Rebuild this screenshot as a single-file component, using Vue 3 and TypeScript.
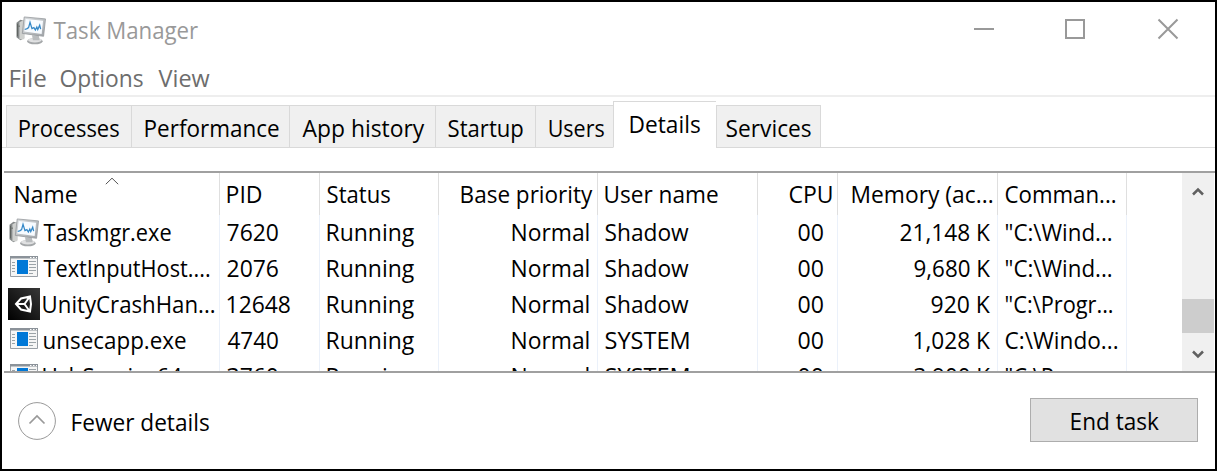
<script setup lang="ts">
import type { Directive } from 'vue'

type Cell = [string, number]
type Row = { icon: 'monitor' | 'program' | 'unity'; cells: Cell[] }

// Condenses a label so that its ink spans the given width, starting at the box's left edge.
const vFit: Directive<HTMLElement, number> = {
  mounted(el, { value }) {
    const ctx = document.createElement('canvas').getContext('2d')
    if (!ctx) return
    const cs = getComputedStyle(el)
    ctx.font = `${cs.fontWeight} ${cs.fontSize} ${cs.fontFamily}`
    const m = ctx.measureText(el.textContent ?? '')
    const scale = value / (m.actualBoundingBoxRight + m.actualBoundingBoxLeft)
    el.style.width = `${value}px`
    el.style.transform = `translateX(${m.actualBoundingBoxLeft * scale + 0.5}px) scaleX(${scale})`
  },
}

const menus: Cell[] = [['File', 35], ['Options', 83], ['View', 51]]
const tabs: { label: string; ink: number; cls: string }[] = [
  { label: 'Processes', ink: 100, cls: 'processes' },
  { label: 'Performance', ink: 133, cls: 'performance' },
  { label: 'App history', ink: 122, cls: 'history' },
  { label: 'Startup', ink: 75, cls: 'startup' },
  { label: 'Users', ink: 55, cls: 'users' },
  { label: 'Details', ink: 70, cls: 'details' },
  { label: 'Services', ink: 85, cls: 'services' },
]
const columns: Cell[] = [
  ['Name', 61], ['PID', 34], ['Status', 63], ['Base priority', 131],
  ['User name', 112], ['CPU', 42], ['Memory (ac...', 140], ['Comman...', 110],
]
const rows: Row[] = [
  { icon: 'monitor', cells: [['Taskmgr.exe', 127], ['7620', 51], ['Running', 87], ['Normal', 76], ['Shadow', 83], ['00', 25], ['21,148 K', 90], ['"C:\\Wind...', 106]] },
  { icon: 'program', cells: [['TextInputHost....', 166], ['2076', 51], ['Running', 87], ['Normal', 76], ['Shadow', 83], ['00', 25], ['9,680 K', 76], ['"C:\\Wind...', 106]] },
  { icon: 'unity', cells: [['UnityCrashHan...', 171], ['12648', 63], ['Running', 87], ['Normal', 76], ['Shadow', 83], ['00', 25], ['920 K', 59], ['"C:\\Progr...', 107]] },
  { icon: 'program', cells: [['unsecapp.exe', 142], ['4740', 51], ['Running', 87], ['Normal', 76], ['SYSTEM', 83], ['00', 25], ['1,028 K', 76], ['C:\\Windo...', 112]] },
  { icon: 'program', cells: [['UsbService64....', 161], ['3760', 51], ['Running', 87], ['Normal', 76], ['SYSTEM', 83], ['00', 25], ['3,900 K', 76], ['"C:\\Progr...', 107]] },
]
</script>

<template>
  <div class="window">
    <svg class="defs" width="0" height="0">
      <defs>
        <linearGradient id="bezel" x1="0" y1="0" x2="1" y2="1">
          <stop offset="0" stop-color="#dcdfe1" /><stop offset="1" stop-color="#a0a4a8" />
        </linearGradient>
        <linearGradient id="dark" x1="0" y1="1" x2="1" y2="0">
          <stop offset="0" stop-color="#000" /><stop offset="1" stop-color="#383838" />
        </linearGradient>
      </defs>
      <symbol id="monitor" viewBox="0 0 32 30">
        <path d="M1 7 5 4 9 5V23L5 25 1 22Z" fill="#85898a" />
        <path d="M4 6.500 9 4V24L4 24Z" fill="#cfd1cf" />
        <path d="M2 8v13M3 10.500h1.500" stroke="#5c615d" />
        <ellipse cx="20" cy="26" rx="8" ry="3.300" fill="#a4a7a9" />
        <ellipse cx="20" cy="25" rx="7" ry="2.300" fill="#e0e1e2" />
        <path d="M17 20h7l1 5h-7z" fill="#b9bcbe" />
        <path d="M9 1 31 3 29 21 7 18Z" fill="url(#bezel)" stroke="#92969a" stroke-width=".8" />
        <path d="M10.500 3 28.500 5 27 18.500 9 16Z" fill="#f7fbff" />
        <path d="M9.500 14 12 13 13.500 12 15 6.500 17 13 19 12 20.500 14.500 22 11.500 23 14 25 9.500 26 13.500" fill="none" stroke="#3488c8" stroke-width="1.300" />
      </symbol>
      <symbol id="program" viewBox="0 0 28 21">
        <path d="M.5.5h27v20H.5z" fill="#f5f5f5" stroke="#999fa6" />
        <path d="M0 0h28v2.500H0z" fill="#8b9299" />
        <path d="M20 1.500h1.500M23 1.500h1.500M26 1.500h1" stroke="#fff" />
        <path d="M7 4h11v14H7z" fill="#0078d7" />
        <path d="M2 6.500h3M2 9.500h3M2 12.500h3M2 15.500h3M19 5.500h7M19 8.500h7M19 11.500h7M19 14.500h7M19 17.500h4" stroke="#9ba3a8" />
      </symbol>
      <symbol id="unity" viewBox="0 0 32 32">
        <path d="M0 0h32v32H0z" fill="url(#dark)" />
        <path d="M8 16 13 10.500 22 8.500 23 16 22 23.500 13 21.500ZM8 16h8.500M16.500 16 21.500 9M16.500 16l5 7" fill="none" stroke="#fff" stroke-width="2" />
      </symbol>
    </svg>

    <header class="titlebar">
      <svg class="app-icon"><use href="#monitor" /></svg>
      <span v-fit="145" class="t title">Task Manager</span>
      <svg class="controls" width="204" height="22" viewBox="0 0 204 22" fill="none" stroke="#999" stroke-width="2">
        <path d="M0 11h20M92 2h18v18H92z" /><path d="m184.500 1.500 19 19m0-19-19 19" />
      </svg>
    </header>

    <nav class="menu">
      <span v-for="[label, ink] in menus" :key="label" v-fit="ink" class="t">{{ label }}</span>
    </nav>

    <div class="tabs">
      <div v-for="tab in tabs" :key="tab.label" class="tab" :class="tab.cls">
        <span v-fit="tab.ink" class="t">{{ tab.label }}</span>
      </div>
    </div>

    <div class="list">
      <div class="table">
        <div class="grid head">
          <div v-for="([label, ink], i) in columns" :key="label" class="cell" :class="'c' + i">
            <span v-fit="ink" class="t">{{ label }}</span>
            <svg v-if="i === 0" class="sort" width="14" height="8" viewBox="0 0 14 8"><path d="m.8 7.200 6.200-6 6.200 6" fill="none" stroke="#555" /></svg>
          </div>
        </div>
        <div v-for="(row, r) in rows" :key="r" class="grid row">
          <div v-for="([text, ink], i) in row.cells" :key="i" class="cell" :class="'c' + i">
            <svg v-if="i === 0" class="icon" :class="row.icon"><use :href="'#' + row.icon" /></svg>
            <span v-fit="ink" class="t">{{ text }}</span>
          </div>
        </div>
      </div>
      <div class="scrollbar">
        <svg width="12" height="9" viewBox="0 0 12 9"><path d="m1 7.500 5-5 5 5" /></svg>
        <div class="thumb"></div>
        <svg width="12" height="9" viewBox="0 0 12 9"><path d="m1 1.500 5 5 5-5" /></svg>
      </div>
    </div>

    <footer class="footer">
      <svg width="38" height="38" viewBox="0 0 38 38" fill="none">
        <circle cx="19" cy="19" r="18.400" stroke="#999" /><path d="m11.500 21.500 7.500-7.500 7.500 7.500" stroke="#999" stroke-width="1.700" />
      </svg>
      <span v-fit="137" class="t fewer">Fewer details</span>
      <button class="end"><span v-fit="88" class="t">End task</span></button>
    </footer>
  </div>
</template>

<style>
body { margin: 0; overflow: hidden; }
</style>

<style scoped>
.window {
  box-sizing: border-box; width: 1217px; height: 471px; border: 2px solid #000; background: #fff;
  display: flex; flex-direction: column; overflow: hidden;
  font: 23.5px/32px "Open Sans", "Noto Sans", sans-serif; color: #000;
}
.defs { position: absolute; }
.t { display: block; white-space: nowrap; transform-origin: 0 50%; flex: none; }
.titlebar { height: 60px; flex: none; display: flex; align-items: flex-start; padding-left: 13px; color: #999; }
.app-icon { width: 32px; height: 29px; margin-top: 14px; }
.title { margin: 12px 0 0 6px; }
.controls { margin: 16px 37px 0 auto; overflow: visible; }
.menu { height: 33px; flex: none; display: flex; gap: 15px; padding-left: 8px; color: #6d6d6d; border-bottom: 2px solid #eee; }
.tabs { height: 51px; margin-bottom: 23px; flex: none; display: flex; align-items: flex-end; padding-left: 4px; box-sizing: border-box; box-shadow: inset 0 -1px #d9d9d9; }
.tab { box-sizing: border-box; height: 43px; border: 1px solid #d9d9d9; border-right: 0; background: #f0f0f0; padding: 6px 0 0 12px; }
.processes { width: 125px; }
.performance { width: 158px; padding-left: 13px; }
.history { width: 146px; }
.startup { width: 100px; }
.users { width: 78px; padding-left: 13px; }
.details { width: 103px; height: 47px; background: #fff; border-bottom-color: #fff; padding-left: 16px; }
.services { width: 105px; padding-left: 9px; border-right: 1px solid #d9d9d9; }
.list { height: 198px; flex: none; margin-left: 2px; border-top: 2px solid #a0a0a0; border-bottom: 2px solid #a0a0a0; display: flex; justify-content: space-between; overflow: hidden; }
.table { width: 1123px; }
.grid { display: grid; grid-template-columns: 216px 100px 119px 159px 160px 80px 160px 129px; height: 36px; }
.head { height: 42px; }
.cell { position: relative; box-sizing: border-box; display: flex; align-items: center; border-right: 1px solid #ebf1fa; padding-left: 7px; }
.row .t { margin-top: -2px; }
.head .cell { border-color: #dfdfdf; }
.c3, .c5, .c6 { justify-content: flex-end; padding: 0 7px 0 0; }
.row .c3 { padding-right: 9px; }
.c5 { padding-right: 14px; }
.head .c3, .head .c6 { padding-right: 5px; }
.head .c5 { padding-right: 6px; }
.head .c0 { padding-left: 11px; }
.row .c0 { padding-left: 4px; }
.sort { position: absolute; left: 101px; top: 4px; }
.icon { flex: none; width: 32px; height: 32px; margin: -2px 3px 0 0; }
.icon.monitor { height: 29px; }
.icon.program { width: 28px; height: 21px; margin: 0 5px 5px 2px; }
.scrollbar { width: 32px; margin-right: 1px; background: #f0f0f0; display: flex; flex-direction: column; align-items: center; }
.scrollbar svg { flex: none; margin-top: 14px; fill: none; stroke: #606060; stroke-width: 2.500; }
.thumb { flex: none; width: 32px; height: 34px; margin-top: 103px; background: #cdcdcd; }
.scrollbar .thumb + svg { margin-top: 17px; }
.footer { flex: 1; display: flex; align-items: center; padding-left: 16px; }
.fewer { margin: 1px 0 0 16px; }
.end { box-sizing: border-box; width: 168px; height: 44px; margin: 0 17px 2px auto; border: 1px solid #adadad; background: #e1e1e1; display: flex; align-items: center; justify-content: center; padding: 1px 0 0 1px; font: inherit; color: #000; }
</style>
